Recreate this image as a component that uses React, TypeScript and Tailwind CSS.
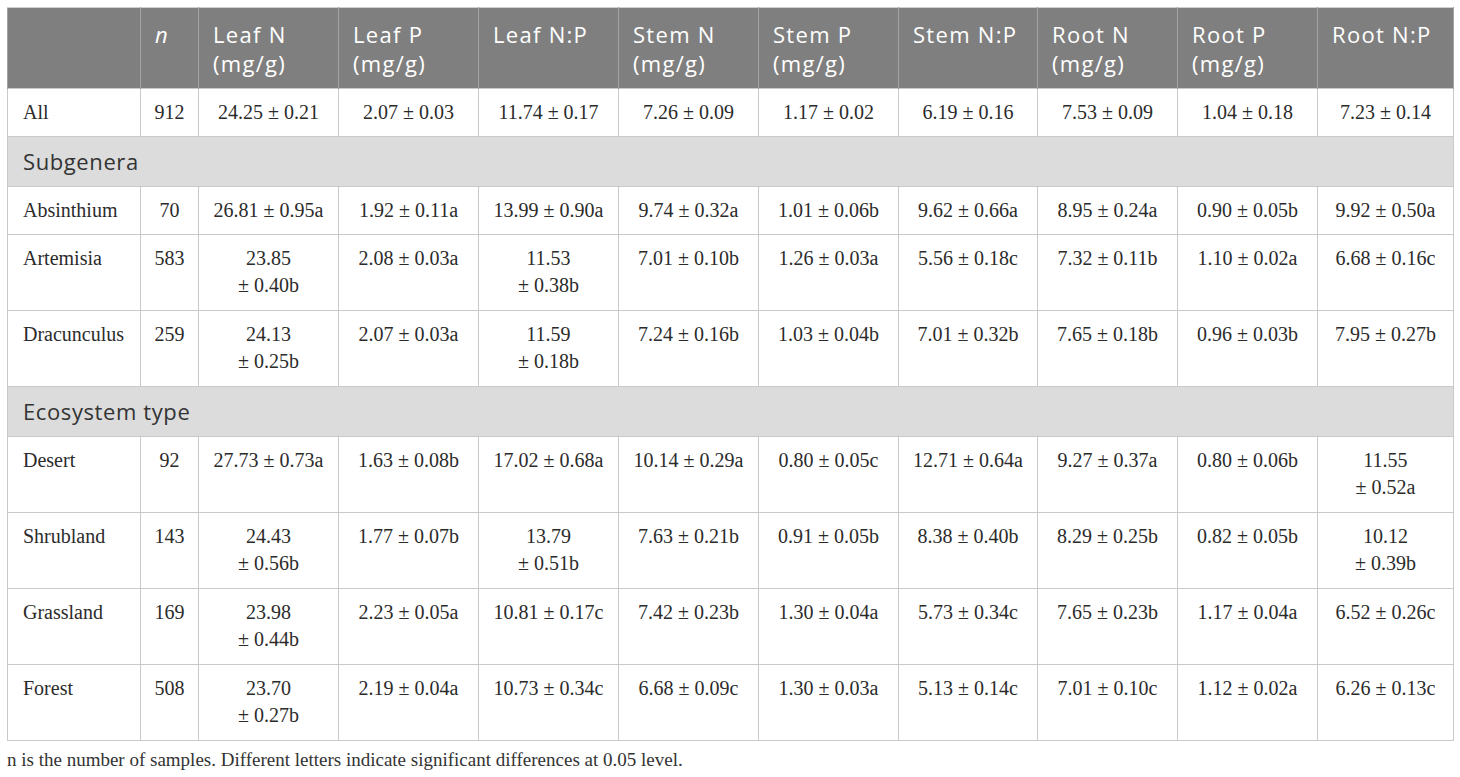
import React from 'react';

const headers = [
  ['', ''],
  ['n', ''],
  ['Leaf N', '(mg/g)'],
  ['Leaf P', '(mg/g)'],
  ['Leaf N:P', ''],
  ['Stem N', '(mg/g)'],
  ['Stem P', '(mg/g)'],
  ['Stem N:P', ''],
  ['Root N', '(mg/g)'],
  ['Root P', '(mg/g)'],
  ['Root N:P', ''],
];

const widths = [133, 58, 140, 140, 140, 140, 140, 139, 140, 140, 136];

type Row = { label: string; n: string; values: string[] };
type Section = { title?: string; rows: Row[] };

// "|" marks where the value wraps onto a second line
const sections: Section[] = [
  {
    rows: [
      {
        label: 'All',
        n: '912',
        values: ['24.25 ± 0.21', '2.07 ± 0.03', '11.74 ± 0.17', '7.26 ± 0.09', '1.17 ± 0.02', '6.19 ± 0.16', '7.53 ± 0.09', '1.04 ± 0.18', '7.23 ± 0.14'],
      },
    ],
  },
  {
    title: 'Subgenera',
    rows: [
      {
        label: 'Absinthium',
        n: '70',
        values: ['26.81 ± 0.95a', '1.92 ± 0.11a', '13.99 ± 0.90a', '9.74 ± 0.32a', '1.01 ± 0.06b', '9.62 ± 0.66a', '8.95 ± 0.24a', '0.90 ± 0.05b', '9.92 ± 0.50a'],
      },
      {
        label: 'Artemisia',
        n: '583',
        values: ['23.85|± 0.40b', '2.08 ± 0.03a', '11.53|± 0.38b', '7.01 ± 0.10b', '1.26 ± 0.03a', '5.56 ± 0.18c', '7.32 ± 0.11b', '1.10 ± 0.02a', '6.68 ± 0.16c'],
      },
      {
        label: 'Dracunculus',
        n: '259',
        values: ['24.13|± 0.25b', '2.07 ± 0.03a', '11.59|± 0.18b', '7.24 ± 0.16b', '1.03 ± 0.04b', '7.01 ± 0.32b', '7.65 ± 0.18b', '0.96 ± 0.03b', '7.95 ± 0.27b'],
      },
    ],
  },
  {
    title: 'Ecosystem type',
    rows: [
      {
        label: 'Desert',
        n: '92',
        values: ['27.73 ± 0.73a', '1.63 ± 0.08b', '17.02 ± 0.68a', '10.14 ± 0.29a', '0.80 ± 0.05c', '12.71 ± 0.64a', '9.27 ± 0.37a', '0.80 ± 0.06b', '11.55|± 0.52a'],
      },
      {
        label: 'Shrubland',
        n: '143',
        values: ['24.43|± 0.56b', '1.77 ± 0.07b', '13.79|± 0.51b', '7.63 ± 0.21b', '0.91 ± 0.05b', '8.38 ± 0.40b', '8.29 ± 0.25b', '0.82 ± 0.05b', '10.12|± 0.39b'],
      },
      {
        label: 'Grassland',
        n: '169',
        values: ['23.98|± 0.44b', '2.23 ± 0.05a', '10.81 ± 0.17c', '7.42 ± 0.23b', '1.30 ± 0.04a', '5.73 ± 0.34c', '7.65 ± 0.23b', '1.17 ± 0.04a', '6.52 ± 0.26c'],
      },
      {
        label: 'Forest',
        n: '508',
        values: ['23.70|± 0.27b', '2.19 ± 0.04a', '10.73 ± 0.34c', '6.68 ± 0.09c', '1.30 ± 0.03a', '5.13 ± 0.14c', '7.01 ± 0.10c', '1.12 ± 0.02a', '6.26 ± 0.13c'],
      },
    ],
  },
];

const sans = "font-['Open_Sans',sans-serif]";
const serif = "font-['Liberation_Serif',serif]";

function Value({ text }: { text: string }) {
  const lines = text.split('|');
  return (
    <>
      {lines.map((line, i) => (
        <div key={i} className="whitespace-nowrap">
          {line}
        </div>
      ))}
    </>
  );
}

export default function App() {
  return (
    <div className="bg-white w-[1460px] h-[777px] pt-[7px] pl-[7px]">
      <table className="table-fixed border-collapse w-[1446px] text-[#2b2b2b]">
        <colgroup>
          {widths.map((w, i) => (
            <col key={i} style={{ width: w }} />
          ))}
        </colgroup>
        <thead>
          <tr className="h-[81px] bg-[#7f7f7f]">
            {headers.map(([a, b], i) => (
              <th
                key={i}
                className={`${sans} align-top text-left font-normal text-white text-[22px] leading-[29px] tracking-[1.3px] pl-[14px] pt-[12px] border-x border-[#a3a3a3] border-t border-t-[#d0d0d0]`}
              >
                {i === 1 ? <span className="italic">{a}</span> : a}
                {b && <div>{b}</div>}
              </th>
            ))}
          </tr>
        </thead>
        <tbody>
          {sections.map((sec, si) => (
            <React.Fragment key={si}>
              {sec.title && (
                <tr className="h-[50px] bg-[#dcdcdc]">
                  <td
                    colSpan={11}
                    className={`${sans} text-[22px] tracking-[0.6px] text-[#333333] pl-[15px] align-middle border border-[#c9c9c9]`}
                  >
                    {sec.title}
                  </td>
                </tr>
              )}
              {sec.rows.map((row) => {
                const tall = row.values.some((v) => v.includes('|'));
                return (
                  <tr key={row.label} className={tall ? 'h-[76px]' : 'h-[48px]'}>
                    <td className={`${serif} text-[20px] leading-[27px] align-top pl-[15px] pt-[10px] border border-[#c9c9c9]`}>
                      {row.label}
                    </td>
                    <td className={`${serif} text-[20px] leading-[27px] align-top text-center pt-[10px] border border-[#c9c9c9]`}>
                      {row.n}
                    </td>
                    {row.values.map((v, vi) => (
                      <td
                        key={vi}
                        className={`${serif} text-[20px] leading-[27px] align-top text-center pt-[10px] border border-[#c9c9c9]`}
                      >
                        <Value text={v} />
                      </td>
                    ))}
                  </tr>
                );
              })}
            </React.Fragment>
          ))}
        </tbody>
      </table>
      <p className={`${serif} text-[19px] leading-[22px] text-[#333333] mt-[8px]`}>
        n is the number of samples. Different letters indicate significant differences at 0.05 level.
      </p>
    </div>
  );
}
